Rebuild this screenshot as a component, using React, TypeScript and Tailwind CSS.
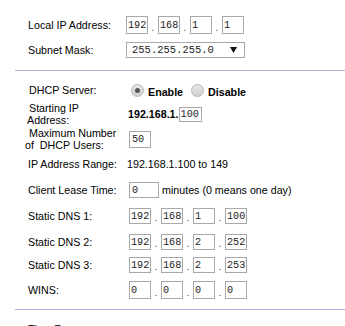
import React from "react";

const label = "text-[10.7px] leading-[12px] text-black";
const box =
  "border border-[#a9a9a9] bg-white pl-[1px] pr-0 text-[10.2px] leading-none text-[#222] font-['Liberation_Mono',monospace] outline-none";

function IpBoxes({ parts, h = "h-[16px]" }: { parts: string[]; h?: string }) {
  return (
    <div className="flex items-end">
      {parts.map((p, i) => (
        <div key={i} className="flex items-end">
          {i > 0 && <span className="w-[10px] text-center text-[10px] leading-[12px] text-[#444]">.</span>}
          <input readOnly value={p} className={`${box} w-[22px] ${h}`} />
        </div>
      ))}
    </div>
  );
}

function Radio({ checked }: { checked?: boolean }) {
  return (
    <span className="flex h-[13px] w-[13px] items-center justify-center rounded-full border border-[#b5b5b5] bg-gradient-to-b from-[#e6e6e6] to-[#d0d0d0]">
      {checked && <span className="h-[5px] w-[5px] rounded-full bg-[#555]" />}
    </span>
  );
}

function Row({ children, className = "" }: { children: React.ReactNode; className?: string }) {
  return <div className={`flex items-center pl-[28px] ${className}`}>{children}</div>;
}

export default function App() {
  return (
    <div className="h-[326px] w-[345px] overflow-hidden bg-white font-['Liberation_Sans',Arial,sans-serif]">
      {/* LAN */}
      <Row className="mt-[16px] h-[18px]">
        <span className={`${label} w-[98px]`}>Local IP Address:</span>
        <IpBoxes parts={["192", "168", "1", "1"]} h="h-[18px]" />
      </Row>
      <Row className="mt-[8px] h-[16px]">
        <span className={`${label} w-[98px]`}>Subnet Mask:</span>
        <div className="flex h-[16px] w-[119px] items-center justify-between border border-[#a9a9a9] pl-[5px] pr-[7px]">
          <span className="text-[10.5px] leading-none text-[#222] font-['Liberation_Mono',monospace]">255.255.255.0</span>
          <svg width="7" height="6" viewBox="0 0 7 6">
            <path d="M0 0h7L3.5 6z" fill="#111" />
          </svg>
        </div>
      </Row>

      <div className="ml-[15px] mt-[12px] h-[1px] bg-[#b3b3e3]" />

      {/* DHCP */}
      <Row className="mt-[12px] h-[14px]">
        <span className={`${label} w-[103px] pl-[1px]`}>DHCP Server:</span>
        <Radio checked />
        <span className="ml-[4px] mt-[3px] text-[10.7px] font-bold leading-[12px]">Enable</span>
        <span className="ml-[8px] flex">
          <Radio />
        </span>
        <span className="ml-[4px] mt-[3px] text-[10.7px] font-bold leading-[12px]">Disable</span>
      </Row>
      <Row className="mt-[5px] h-[24px]">
        <div className={`${label} w-[100px]`}>
          <div className="pl-[1px]">Starting IP</div>
          <div className="-ml-[1px]">Address:</div>
        </div>
        <span className="text-[10.7px] font-bold leading-[12px]">192.168.1.</span>
        <input readOnly value="100" className={`${box} h-[15px] w-[23px]`} />
      </Row>
      <Row className="mt-[1px] h-[24px]">
        <div className={`${label} w-[101px]`}>
          <div className="pl-[1px]">Maximum Number</div>
          <div className="-ml-[3px]">of&nbsp; DHCP Users:</div>
        </div>
        <input readOnly value="50" className={`${box} h-[17px] w-[22px] pl-[2px]`} />
      </Row>
      <Row className="mt-[6px] h-[14px]">
        <span className={`${label} w-[99px]`}>IP Address Range:</span>
        <span className={label}>192.168.1.100 to 149</span>
      </Row>
      <Row className="mt-[11px] h-[16px]">
        <span className={`${label} w-[101px]`}>Client Lease Time:</span>
        <input readOnly value="0" className={`${box} h-[16px] w-[30px] pl-[2px]`} />
        <span className={`${label} ml-[3px]`}>minutes (0 means one day)</span>
      </Row>
      <Row className="mt-[10px] h-[16px]">
        <span className={`${label} w-[101px]`}>Static DNS 1:</span>
        <IpBoxes parts={["192", "168", "1", "100"]} />
      </Row>
      <Row className="mt-[10px] h-[16px]">
        <span className={`${label} w-[101px]`}>Static DNS 2:</span>
        <IpBoxes parts={["192", "168", "2", "252"]} />
      </Row>
      <Row className="mt-[7px] h-[16px]">
        <span className={`${label} w-[101px]`}>Static DNS 3:</span>
        <IpBoxes parts={["192", "168", "2", "253"]} />
      </Row>
      <Row className="mt-[8px] h-[18px]">
        <span className={`${label} w-[101px]`}>WINS:</span>
        <IpBoxes parts={["0", "0", "0", "0"]} h="h-[18px]" />
      </Row>

      <div className="ml-[15px] mt-[10px] h-[1px] bg-[#b3b3e3]" />

      <Row className="mt-[12px] h-[14px]">
        <span className={label}>Time Zone:</span>
      </Row>
    </div>
  );
}
